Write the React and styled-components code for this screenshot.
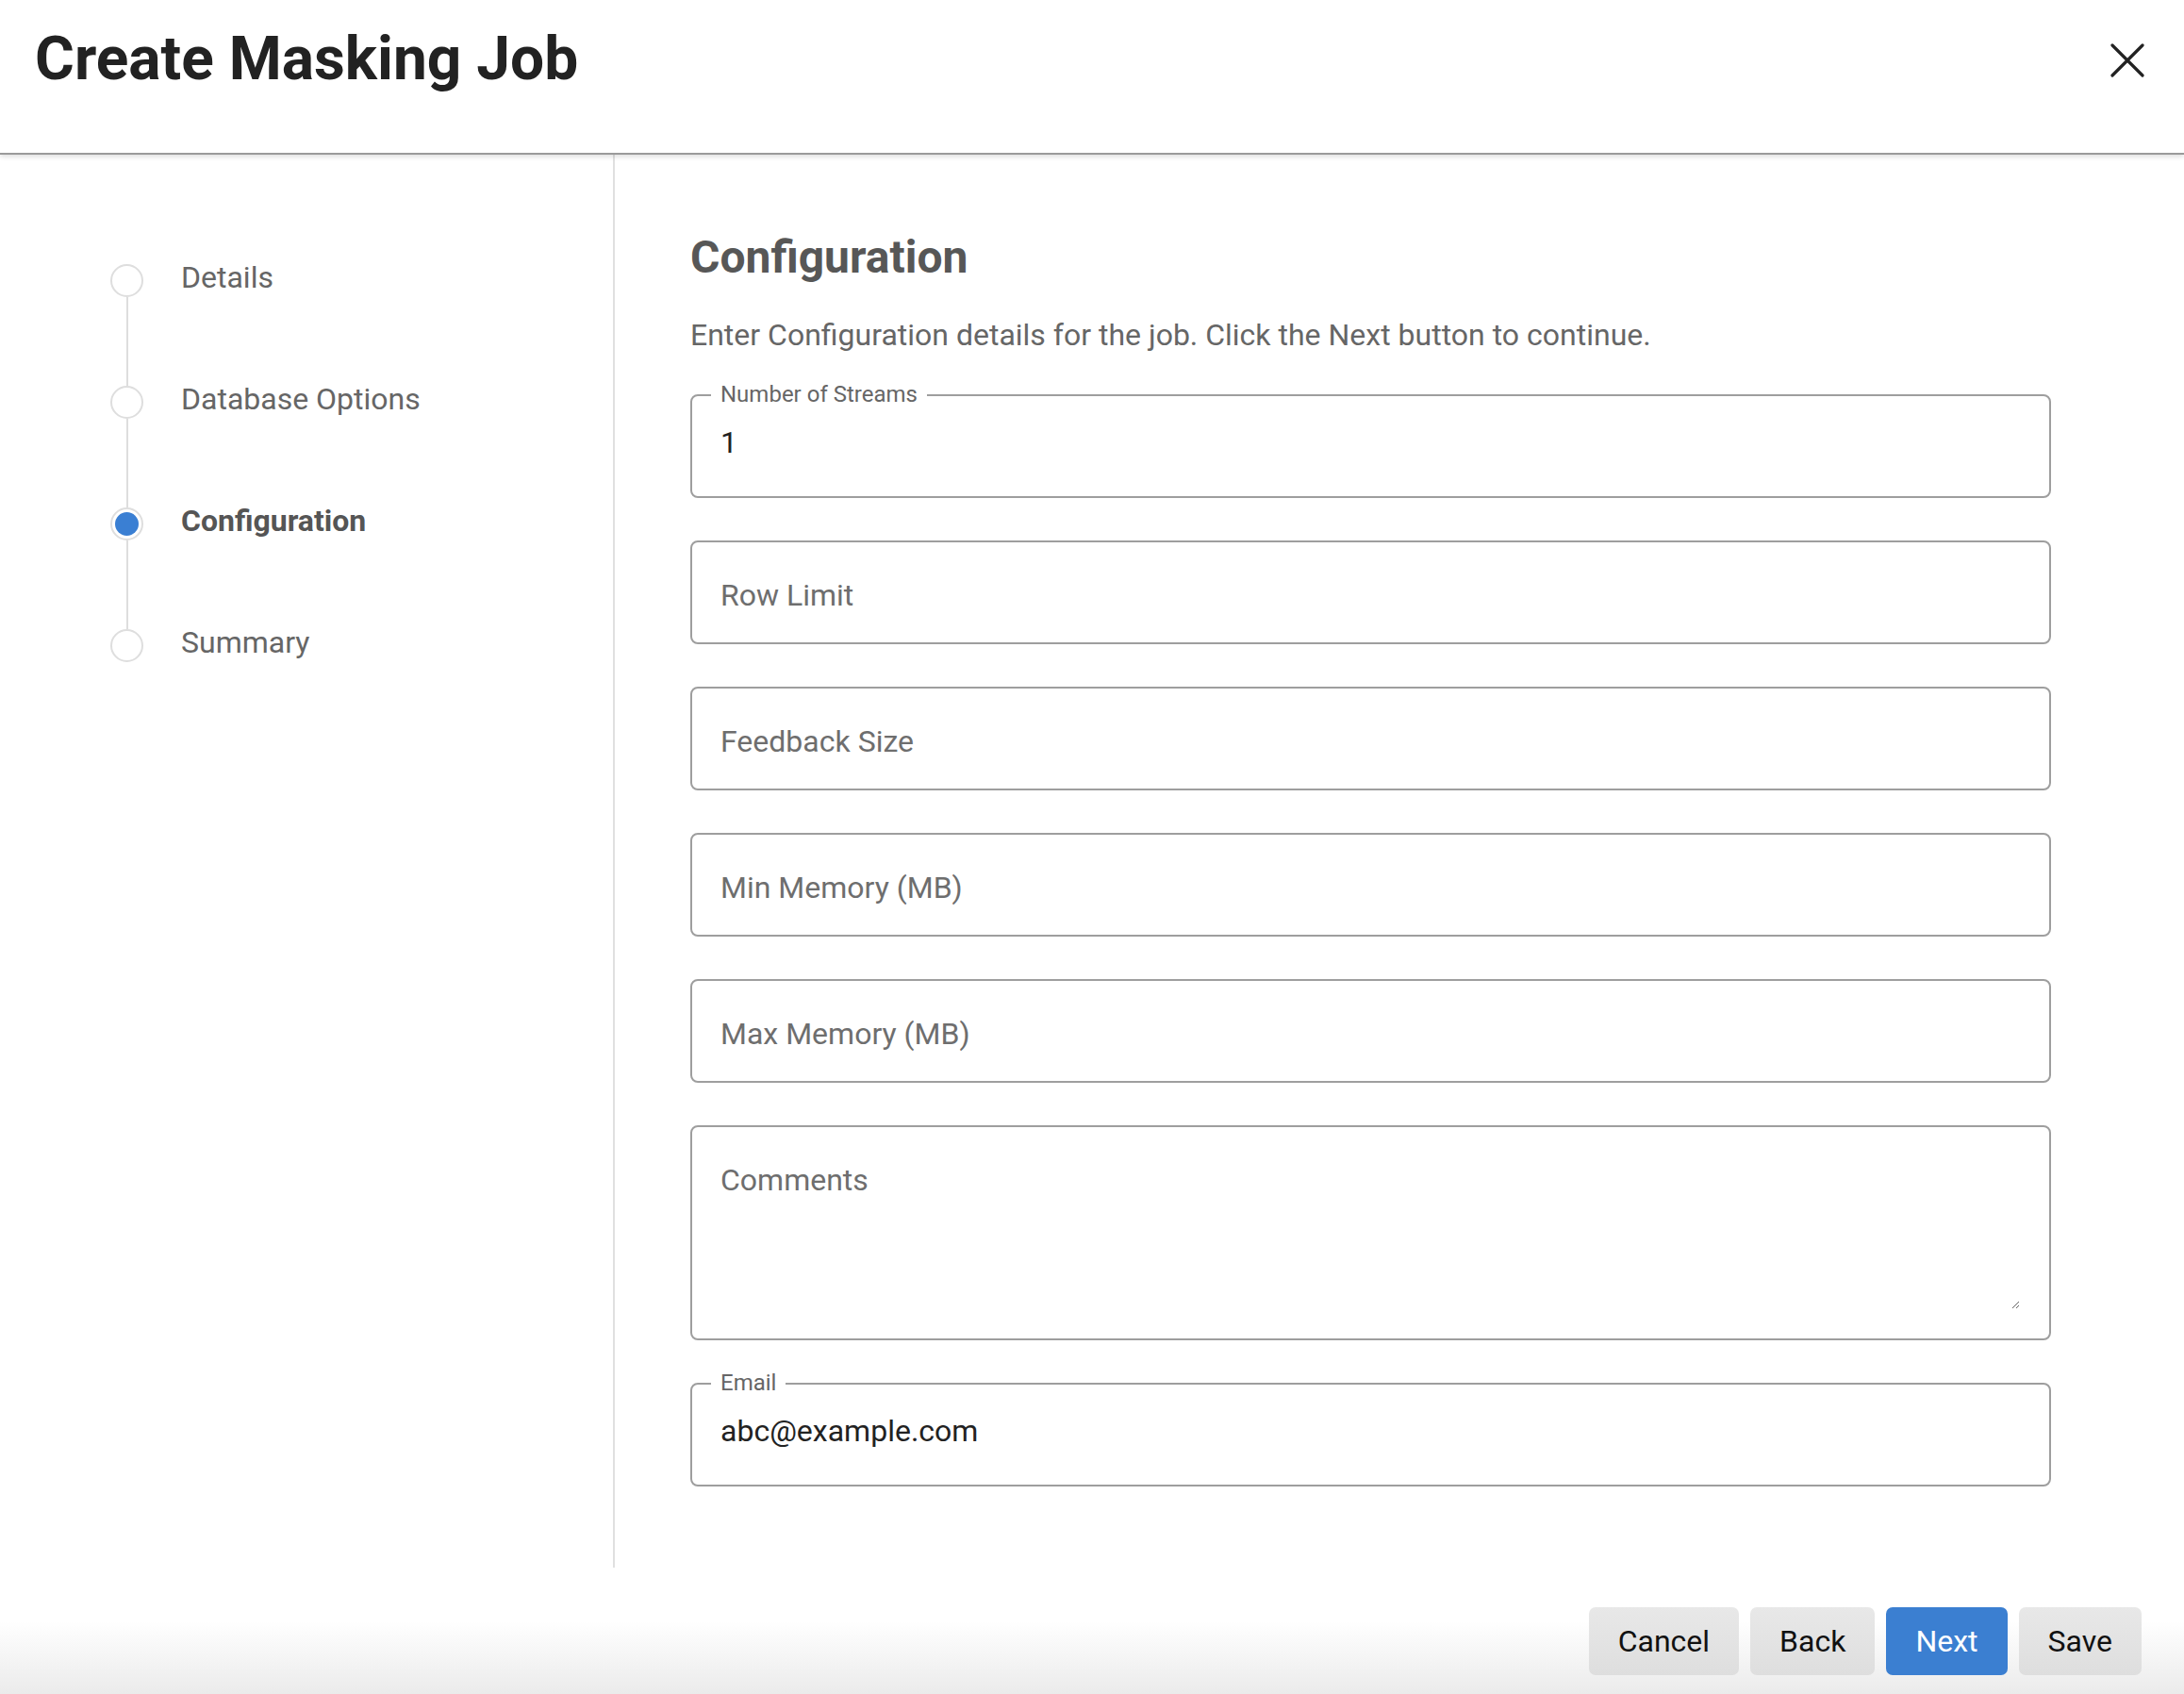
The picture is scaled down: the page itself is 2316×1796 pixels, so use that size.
import React from 'react';
import styled, { createGlobalStyle, css } from 'styled-components';

const GlobalStyle = createGlobalStyle`
  html, body {
    margin: 0;
    padding: 0;
    background: #fff;
  }
  body {
    font-family: Roboto, "Liberation Sans", Arial, sans-serif;
  }
  * {
    box-sizing: border-box;
  }
`;

const Page = styled.div`
  display: flex;
  flex-direction: column;
  height: 100vh;
  background: #fff;
`;

const Header = styled.header`
  display: flex;
  justify-content: space-between;
  align-items: flex-start;
  height: 164px;
  padding: 31px 42px 0 37px;
  border-bottom: 2px solid #9a9a9a;
  box-shadow: 0 2px 5px rgba(0, 0, 0, 0.14);
  position: relative;
  z-index: 1;
`;

const Title = styled.h1`
  margin: 0;
  font-size: 64px;
  line-height: 1;
  font-weight: 700;
  color: #222;
`;

const CloseButton = styled.button`
  margin-top: 15px;
  width: 36px;
  height: 36px;
  padding: 0;
  border: none;
  background: transparent;
  cursor: pointer;
  svg {
    display: block;
  }
`;

const Body = styled.div`
  flex: 1;
  display: flex;
  min-height: 0;
`;

const Sidebar = styled.nav`
  width: 652px;
  flex-shrink: 0;
  border-right: 2px solid #e0e0e0;
  padding: 116px 0 0 117px;
`;

const Step = styled.div`
  display: flex;
  height: ${p => (p.last ? 'auto' : '129px')};
`;

const Marker = styled.div`
  display: flex;
  flex-direction: column;
  align-items: center;
  width: 35px;
`;

const Circle = styled.div`
  width: 35px;
  height: 35px;
  flex-shrink: 0;
  border-radius: 50%;
  border: 2px solid #dedede;
  background: #fff;
  ${p => p.active && css`
    padding: 3px;
    background: #3a7fd3;
    background-clip: content-box;
  `}
`;

const Connector = styled.div`
  flex: 1;
  width: 2px;
  background: #dedede;
`;

const StepLabel = styled.span`
  margin: -3px 0 0 40px;
  font-size: 32px;
  line-height: 35px;
  color: ${p => (p.active ? '#555' : '#666')};
  font-weight: ${p => (p.active ? 700 : 400)};
`;

const Main = styled.main`
  flex: 1;
  padding: 85px 141px 0 80px;
`;

const Heading = styled.h2`
  margin: 0;
  font-size: 48px;
  line-height: 1;
  font-weight: 700;
  color: #575757;
`;

const Intro = styled.p`
  margin: 42px 0 0;
  font-size: 32px;
  line-height: 1;
  color: #666;
`;

const Fields = styled.div`
  display: flex;
  flex-direction: column;
  gap: 45px;
  margin-top: 47px;
`;

const Field = styled.div`
  position: relative;
`;

const FloatLabel = styled.label`
  position: absolute;
  left: 22px;
  top: -12px;
  padding: 0 10px;
  background: #fff;
  font-size: 24px;
  line-height: 24px;
  color: #666;
`;

const fieldBox = css`
  width: 100%;
  border: 2px solid #9e9e9e;
  border-radius: 8px;
  background: #fff;
`;

const Input = styled.input`
  ${fieldBox};
  display: block;
  height: 110px;
  padding: ${p => (p.labelled ? '0 30px 9px' : '6px 30px 0')};
  font-family: inherit;
  font-size: 32px;
  color: #222;
  outline: none;
  &::placeholder {
    color: #6e6e6e;
    opacity: 1;
  }
`;

const TextareaBox = styled.div`
  ${fieldBox};
  height: 228px;
  padding: 37px 31px 31px 30px;
`;

const Textarea = styled.textarea`
  display: block;
  width: 100%;
  height: 156px;
  padding: 0;
  border: none;
  outline: none;
  resize: vertical;
  font-family: inherit;
  font-size: 32px;
  line-height: 38px;
  color: #222;
  &::placeholder {
    color: #6e6e6e;
    opacity: 1;
  }
`;

const Footer = styled.footer`
  display: flex;
  justify-content: flex-end;
  align-items: flex-start;
  gap: 12px;
  height: 134px;
  padding: 42px 45px 0;
  background: linear-gradient(to bottom, #fff 42%, #ebebeb 100%);
`;

const Button = styled.button`
  height: 72px;
  padding: 0 31px;
  border: none;
  border-radius: 7px;
  font-family: inherit;
  font-size: 32px;
  cursor: pointer;
  color: ${p => (p.primary ? '#fff' : '#111')};
  background: ${p => (p.primary ? '#3b7fd1' : 'linear-gradient(#e8e8e8, #dedede)')};
`;

const steps = [
  { name: 'Details' },
  { name: 'Database Options' },
  { name: 'Configuration', active: true },
  { name: 'Summary' }
];

const fields = [
  { label: 'Number of Streams', value: '1' },
  { placeholder: 'Row Limit' },
  { placeholder: 'Feedback Size' },
  { placeholder: 'Min Memory (MB)' },
  { placeholder: 'Max Memory (MB)' },
  { placeholder: 'Comments', multiline: true },
  { label: 'Email', value: 'abc@example.com' }
];

function CloseIcon() {
  return (
    <svg width="36" height="36" viewBox="0 0 36 36">
      <path d="M2 2 L34 34 M34 2 L2 34" stroke="#222" strokeWidth="3.2" strokeLinecap="round"/>
    </svg>
  );
}

export default function App() {
  return (
    <Page>
      <GlobalStyle/>
      <Header>
        <Title>Create Masking Job</Title>
        <CloseButton aria-label="Close"><CloseIcon/></CloseButton>
      </Header>
      <Body>
        <Sidebar>
          {steps.map((s, i) => {
            const last = i === steps.length - 1;
            return (
              <Step key={s.name} last={last}>
                <Marker>
                  <Circle active={s.active}/>
                  {!last && <Connector/>}
                </Marker>
                <StepLabel active={s.active}>{s.name}</StepLabel>
              </Step>
            );
          })}
        </Sidebar>
        <Main>
          <Heading>Configuration</Heading>
          <Intro>Enter Configuration details for the job. Click the Next button to continue.</Intro>
          <Fields>
            {fields.map(f => (
              <Field key={f.label || f.placeholder}>
                {f.multiline ? (
                  <TextareaBox>
                    <Textarea placeholder={f.placeholder}/>
                  </TextareaBox>
                ) : (
                  <Input labelled={!!f.label} defaultValue={f.value} placeholder={f.placeholder}/>
                )}
                {f.label && <FloatLabel>{f.label}</FloatLabel>}
              </Field>
            ))}
          </Fields>
        </Main>
      </Body>
      <Footer>
        <Button>Cancel</Button>
        <Button>Back</Button>
        <Button primary>Next</Button>
        <Button>Save</Button>
      </Footer>
    </Page>
  );
}
